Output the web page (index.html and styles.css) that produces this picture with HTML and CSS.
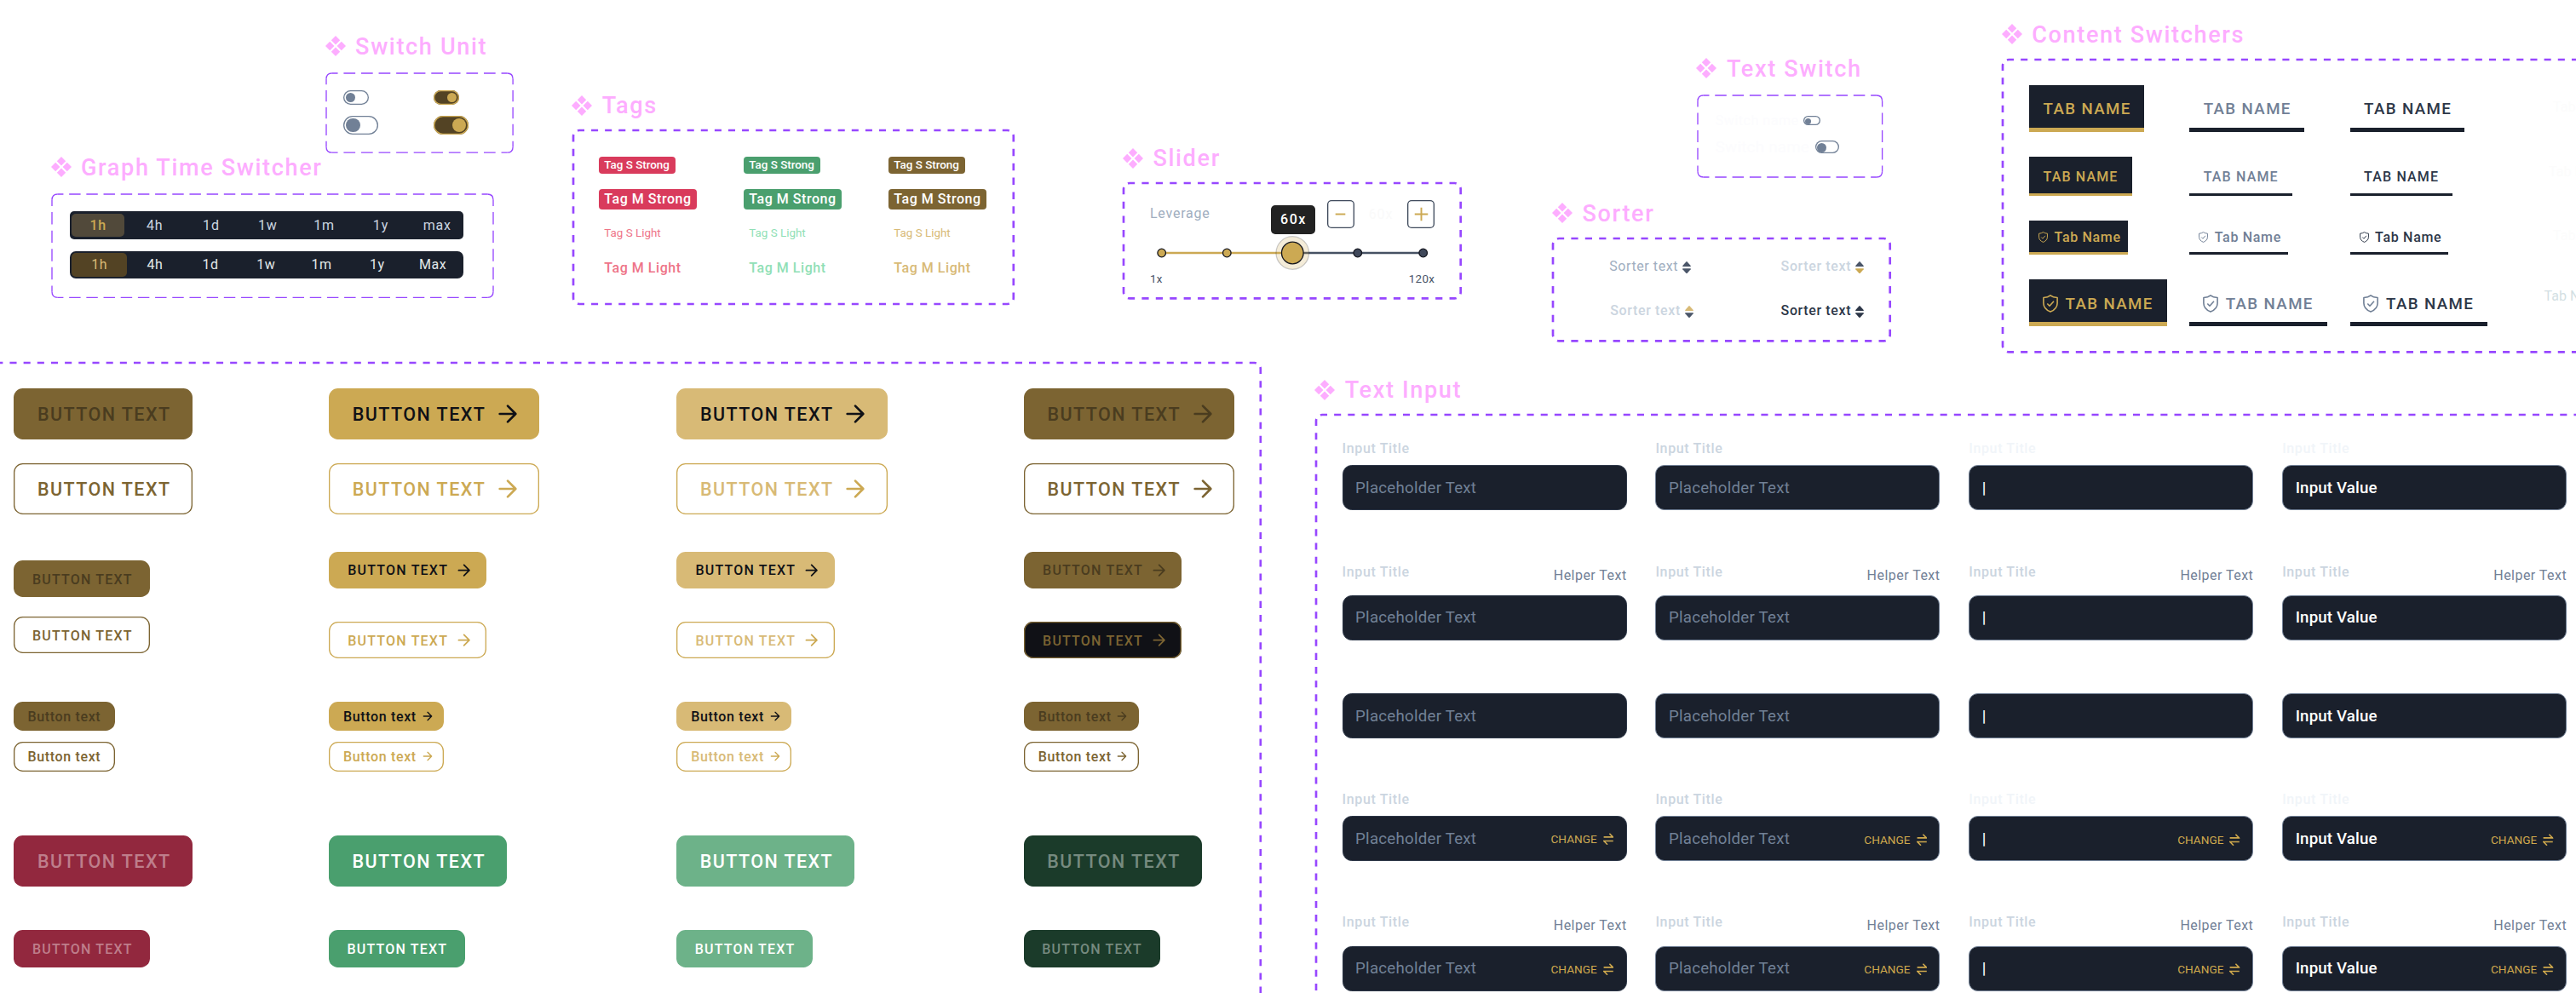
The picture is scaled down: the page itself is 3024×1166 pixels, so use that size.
FILE: index.html
```html
<!DOCTYPE html>
<html lang="en">
<head>
<meta charset="utf-8">
<title>Component library</title>
<link rel="stylesheet" href="styles.css">
</head>
<body>
<svg class="sprite" aria-hidden="true">
  <symbol id="component" viewBox="0 0 24 24"><path d="M12 0l5.2 5.2L12 10.4 6.8 5.2zM5.2 6.8l5.2 5.2-5.2 5.2L0 12zM18.8 6.8L24 12l-5.2 5.2-5.2-5.2zM12 13.6l5.2 5.2L12 24l-5.2-5.2z" fill="currentColor"/></symbol>
  <symbol id="arrow" viewBox="0 0 24 24"><path d="M5 12h14M12 5l7 7-7 7" fill="none" stroke="currentColor" stroke-width="2" stroke-linecap="round" stroke-linejoin="round"/></symbol>
  <symbol id="swap" viewBox="0 0 12.4 14.4"><path d="M.6 4.9H11.6L7.4.7M11.8 9.5H.8L5 13.7" fill="none" stroke="currentColor" stroke-width="1.6"/></symbol>
  <symbol id="shield" viewBox="0 0 18 21"><path d="M9 .9C7 2.500 4 3.300 .9 3.500V10C.9 15 4.500 18.300 9 20.100 13.500 18.300 17.100 15 17.100 10V3.500C14 3.300 11 2.500 9 .9zM5.300 10.500l2.700 2.700 5-5.400" fill="none" stroke="currentColor" stroke-width="1.600" stroke-linejoin="round"/></symbol>
  <symbol id="sort-up" viewBox="0 0 10 6.200"><path d="M4.300.4Q5-.2 5.700.4L9.700 5Q10.200 6 9.300 6H.7Q-.2 6 .3 5z" fill="currentColor"/></symbol>
  <symbol id="sort-down" viewBox="0 0 10 6.200"><path d="M4.300 5.800Q5 6.400 5.700 5.800L9.700 1.200Q10.200.2 9.300.2H.7Q-.2.2.3 1.200z" fill="currentColor"/></symbol>
</svg>

<main class="canvas">

  <section class="set set-switch">
    <h2 class="set-title"><svg class="set-icon"><use href="#component"/></svg>Switch Unit</h2>
    <div class="frame frame-thin">
      <svg class="outline thin"><path class="corner" d="M0 6.700Q0 0 6.700 0M212.400 0Q219.100 0 219.100 6.700M219.100 86.400Q219.100 93.100 212.400 93.100M6.700 93.100Q0 93.100 0 86.400"/><path pathLength="30" d="M6.700 0H212.400"/><path pathLength="30" d="M6.700 93.100H212.400"/><path pathLength="12" d="M0 6.700V86.400"/><path pathLength="12" d="M219.100 6.700V86.400"/></svg>
      <div class="switch-row"><span class="switch s"></span><span class="switch s on"></span></div>
      <div class="switch-row"><span class="switch m"></span><span class="switch m on"></span></div>
    </div>
  </section>

  <section class="set set-graph">
    <h2 class="set-title"><svg class="set-icon"><use href="#component"/></svg>Graph Time Switcher</h2>
    <div class="frame frame-thin">
      <svg class="outline thin"><path class="corner" d="M0 6.700Q0 0 6.700 0M511.300 0Q518 0 518 6.700M518 114.600Q518 121.300 511.300 121.300M6.700 121.300Q0 121.300 0 114.600"/><path pathLength="75" d="M6.700 0H511.300"/><path pathLength="75" d="M6.700 121.300H511.300"/><path pathLength="15" d="M0 6.700V114.600"/><path pathLength="15" d="M518 6.700V114.600"/></svg>
      <div class="times"><span class="time active">1h</span><span class="time">4h</span><span class="time">1d</span><span class="time">1w</span><span class="time">1m</span><span class="time">1y</span><span class="time">max</span></div>
      <div class="times times-alt"><span class="time active">1h</span><span class="time">4h</span><span class="time">1d</span><span class="time">1w</span><span class="time">1m</span><span class="time">1y</span><span class="time">Max</span></div>
    </div>
  </section>

  <section class="set set-tags">
    <h2 class="set-title"><svg class="set-icon"><use href="#component"/></svg>Tags</h2>
    <div class="frame">
      <svg class="outline"><path pathLength="63" d="M5 .4Q6 0 7 0H509.800Q510.800 0 511.800 .4"/><path pathLength="63" d="M5 203.600Q6 204 7 204H509.800Q510.800 204 511.800 203.600"/><path pathLength="23" d="M.4 5Q0 6 0 7V197Q0 198 .4 199"/><path pathLength="23" d="M516.400 5Q516.800 6 516.800 7V197Q516.800 198 516.400 199"/></svg>
      <div class="tag-column red"><span class="tag tag-s">Tag S Strong</span><span class="tag tag-m">Tag M Strong</span><span class="tag tag-s light">Tag S Light</span><span class="tag tag-m light">Tag M Light</span></div>
      <div class="tag-column green"><span class="tag tag-s">Tag S Strong</span><span class="tag tag-m">Tag M Strong</span><span class="tag tag-s light">Tag S Light</span><span class="tag tag-m light">Tag M Light</span></div>
      <div class="tag-column gold"><span class="tag tag-s">Tag S Strong</span><span class="tag tag-m">Tag M Strong</span><span class="tag tag-s light">Tag S Light</span><span class="tag tag-m light">Tag M Light</span></div>
    </div>
  </section>

  <section class="set set-slider">
    <h2 class="set-title"><svg class="set-icon"><use href="#component"/></svg>Slider</h2>
    <div class="frame">
      <svg class="outline"><path pathLength="47" d="M5 .4Q6 0 7 0H388.700Q389.700 0 390.700 .4"/><path pathLength="47" d="M5 134.900Q6 135.300 7 135.300H388.700Q389.700 135.300 390.700 134.900"/><path pathLength="15" d="M.4 5Q0 6 0 7V128.300Q0 129.300 .4 130.300"/><path pathLength="15" d="M395.300 5Q395.700 6 395.700 7V128.300Q395.700 129.300 395.300 130.300"/></svg>
      <div class="leverage">
        <span class="leverage-label">Leverage</span>
        <button class="step"><svg viewBox="0 0 24 24"><path d="M7.500 12h9"/></svg></button>
        <span class="leverage-value">60x</span>
        <button class="step"><svg viewBox="0 0 24 24"><path d="M6 12h12M12 6v12"/></svg></button>
      </div>
      <svg class="track" viewBox="0 0 340 42">
        <path d="M16.700 21H170" stroke="#cca953" stroke-width="2.600"/>
        <path d="M170 21H323.700" stroke="#465163" stroke-width="2.600"/>
        <g fill="#cca953" stroke="#14161f" stroke-width="1.300"><circle cx="16.700" cy="21" r="4.800"/><circle cx="93.300" cy="21" r="4.800"/></g>
        <g fill="#3f485a" stroke="#14161f" stroke-width="1.300"><circle cx="246.800" cy="21" r="4.800"/><circle cx="323.700" cy="21" r="4.800"/></g>
        <circle cx="170.300" cy="21" r="19.300" fill="#cca953" fill-opacity=".22" stroke="#1a202c" stroke-opacity=".22" stroke-width="1.300"/>
        <circle cx="170.300" cy="21" r="12.800" fill="#cca953" stroke="#14161f" stroke-width="1.300"/>
      </svg>
      <div class="scale"><span>1x</span><span>120x</span></div>
      <span class="tooltip">60x</span>
    </div>
  </section>

  <section class="set set-text-switch">
    <h2 class="set-title"><svg class="set-icon"><use href="#component"/></svg>Text Switch</h2>
    <div class="frame frame-thin">
      <svg class="outline thin"><path class="corner" d="M0 6.700Q0 0 6.700 0M209.900 0Q216.600 0 216.600 6.700M216.600 89.300Q216.600 96 209.900 96M6.700 96Q0 96 0 89.300"/><path pathLength="30" d="M6.700 0H209.900"/><path pathLength="30" d="M6.700 96H209.900"/><path pathLength="12" d="M0 6.700V89.300"/><path pathLength="12" d="M216.600 6.700V89.300"/></svg>
      <div class="named-switch"><span class="switch-name">Switch name</span><span class="switch xs"></span></div>
      <div class="named-switch medium"><span class="switch-name">Switch name</span><span class="switch sm"></span></div>
    </div>
  </section>

  <section class="set set-sorter">
    <h2 class="set-title"><svg class="set-icon"><use href="#component"/></svg>Sorter</h2>
    <div class="frame">
      <svg class="outline"><path pathLength="47" d="M5 .4Q6 0 7 0H388.700Q389.700 0 390.700 .4"/><path pathLength="47" d="M5 119.900Q6 120.300 7 120.300H388.700Q389.700 120.300 390.700 119.900"/><path pathLength="13" d="M.4 5Q0 6 0 7V113.300Q0 114.300 .4 115.300"/><path pathLength="13" d="M395.300 5Q395.700 6 395.700 7V113.300Q395.700 114.300 395.300 115.300"/></svg>
      <div class="sorter idle">Sorter text<span class="sort"><svg><use href="#sort-up"/></svg><svg><use href="#sort-down"/></svg></span></div>
      <div class="sorter down">Sorter text<span class="sort"><svg><use href="#sort-up"/></svg><svg><use href="#sort-down"/></svg></span></div>
      <div class="sorter up">Sorter text<span class="sort"><svg><use href="#sort-up"/></svg><svg><use href="#sort-down"/></svg></span></div>
      <div class="sorter hover">Sorter text<span class="sort"><svg><use href="#sort-up"/></svg><svg><use href="#sort-down"/></svg></span></div>
    </div>
  </section>

  <section class="set set-content">
    <h2 class="set-title"><svg class="set-icon"><use href="#component"/></svg>Content Switchers</h2>
    <div class="frame">
      <svg class="outline open"><path d="M5 .4Q6 0 7 0H680"/><path d="M5 342.900Q6 343.300 7 343.300H680"/><path class="fit" pathLength="41" d="M.4 5Q0 6 0 7V336.300Q0 337.300 .4 338.300"/></svg>
      <div class="tab-row large"><span class="tab active">TAB NAME</span><span class="tab">TAB NAME</span><span class="tab hover">TAB NAME</span><span class="ghost">Tab Name</span></div>
      <div class="tab-row medium"><span class="tab active">TAB NAME</span><span class="tab">TAB NAME</span><span class="tab hover">TAB NAME</span><span class="ghost">Tab Name</span></div>
      <div class="tab-row small"><span class="tab active"><svg><use href="#shield"/></svg>Tab Name</span><span class="tab"><svg><use href="#shield"/></svg>Tab Name</span><span class="tab hover"><svg><use href="#shield"/></svg>Tab Name</span><span class="ghost">Tab Name</span></div>
      <div class="tab-row large with-icon"><span class="tab active"><svg><use href="#shield"/></svg>TAB NAME</span><span class="tab"><svg><use href="#shield"/></svg>TAB NAME</span><span class="tab hover"><svg><use href="#shield"/></svg>TAB NAME</span><span class="ghost">Tab Name</span></div>
    </div>
  </section>

  <section class="set set-buttons">
    <div class="frame">
      <svg class="outline open"><path d="M1484.800 .4Q1483.800 0 1482.800 0H0"/><path d="M1489.400 5Q1489.800 6 1489.800 7V760"/></svg>
      <button class="btn lg olive">BUTTON TEXT</button>
      <button class="btn lg icon primary">BUTTON TEXT<svg><use href="#arrow"/></svg></button>
      <button class="btn lg icon pale">BUTTON TEXT<svg><use href="#arrow"/></svg></button>
      <button class="btn lg icon olive">BUTTON TEXT<svg><use href="#arrow"/></svg></button>

      <button class="btn lg line olive-line">BUTTON TEXT</button>
      <button class="btn lg icon line gold-line">BUTTON TEXT<svg><use href="#arrow"/></svg></button>
      <button class="btn lg icon line pale-line">BUTTON TEXT<svg><use href="#arrow"/></svg></button>
      <button class="btn lg icon line olive-line">BUTTON TEXT<svg><use href="#arrow"/></svg></button>

      <button class="btn md olive lowered">BUTTON TEXT</button>
      <button class="btn md icon primary">BUTTON TEXT<svg><use href="#arrow"/></svg></button>
      <button class="btn md icon pale">BUTTON TEXT<svg><use href="#arrow"/></svg></button>
      <button class="btn md icon olive">BUTTON TEXT<svg><use href="#arrow"/></svg></button>

      <button class="btn md line olive-line">BUTTON TEXT</button>
      <button class="btn md icon line gold-line nudged">BUTTON TEXT<svg><use href="#arrow"/></svg></button>
      <button class="btn md icon line pale-line nudged">BUTTON TEXT<svg><use href="#arrow"/></svg></button>
      <button class="btn md icon line olive-line filled nudged">BUTTON TEXT<svg><use href="#arrow"/></svg></button>

      <button class="btn sm olive">Button text</button>
      <button class="btn sm icon primary">Button text<svg><use href="#arrow"/></svg></button>
      <button class="btn sm icon pale">Button text<svg><use href="#arrow"/></svg></button>
      <button class="btn sm icon olive">Button text<svg><use href="#arrow"/></svg></button>

      <button class="btn sm line olive-line">Button text</button>
      <button class="btn sm icon line gold-line">Button text<svg><use href="#arrow"/></svg></button>
      <button class="btn sm icon line pale-line">Button text<svg><use href="#arrow"/></svg></button>
      <button class="btn sm icon line olive-line">Button text<svg><use href="#arrow"/></svg></button>

      <button class="btn lg wine">BUTTON TEXT</button>
      <button class="btn lg green">BUTTON TEXT</button>
      <button class="btn lg mint">BUTTON TEXT</button>
      <button class="btn lg forest">BUTTON TEXT</button>

      <button class="btn md tall wine">BUTTON TEXT</button>
      <button class="btn md tall green">BUTTON TEXT</button>
      <button class="btn md tall mint">BUTTON TEXT</button>
      <button class="btn md tall forest">BUTTON TEXT</button>
    </div>
  </section>

  <section class="set set-input">
    <h2 class="set-title"><svg class="set-icon"><use href="#component"/></svg>Text Input</h2>
    <div class="frame">
      <svg class="outline open"><path d="M5 .4Q6 0 7 0H1490"/><path d="M.4 5Q0 6 0 7V690"/></svg>
      <div class="field-row row-1">
        <div class="field"><div class="field-head"><span>Input Title</span></div><div class="input plain">Placeholder Text</div></div>
        <div class="field"><div class="field-head"><span>Input Title</span></div><div class="input">Placeholder Text</div></div>
        <div class="field"><div class="field-head faint"><span>Input Title</span></div><div class="input filled">|</div></div>
        <div class="field"><div class="field-head faint"><span>Input Title</span></div><div class="input filled">Input Value</div></div>
      </div>
      <div class="field-row row-2">
        <div class="field"><div class="field-head"><span>Input Title</span><span class="helper">Helper Text</span></div><div class="input plain">Placeholder Text</div></div>
        <div class="field"><div class="field-head"><span>Input Title</span><span class="helper">Helper Text</span></div><div class="input">Placeholder Text</div></div>
        <div class="field"><div class="field-head"><span>Input Title</span><span class="helper">Helper Text</span></div><div class="input filled">|</div></div>
        <div class="field"><div class="field-head"><span>Input Title</span><span class="helper">Helper Text</span></div><div class="input filled">Input Value</div></div>
      </div>
      <div class="field-row row-3">
        <div class="field"><div class="input plain">Placeholder Text</div></div>
        <div class="field"><div class="input">Placeholder Text</div></div>
        <div class="field"><div class="input filled">|</div></div>
        <div class="field"><div class="input filled">Input Value</div></div>
      </div>
      <div class="field-row row-4">
        <div class="field"><div class="field-head"><span>Input Title</span></div><div class="input plain">Placeholder Text<span class="change">CHANGE<svg><use href="#swap"/></svg></span></div></div>
        <div class="field"><div class="field-head"><span>Input Title</span></div><div class="input">Placeholder Text<span class="change low">CHANGE<svg><use href="#swap"/></svg></span></div></div>
        <div class="field"><div class="field-head faint"><span>Input Title</span></div><div class="input filled">|<span class="change low">CHANGE<svg><use href="#swap"/></svg></span></div></div>
        <div class="field"><div class="field-head faint"><span>Input Title</span></div><div class="input filled">Input Value<span class="change low">CHANGE<svg><use href="#swap"/></svg></span></div></div>
      </div>
      <div class="field-row row-5">
        <div class="field"><div class="field-head"><span>Input Title</span><span class="helper">Helper Text</span></div><div class="input plain">Placeholder Text<span class="change low">CHANGE<svg><use href="#swap"/></svg></span></div></div>
        <div class="field"><div class="field-head"><span>Input Title</span><span class="helper">Helper Text</span></div><div class="input">Placeholder Text<span class="change low">CHANGE<svg><use href="#swap"/></svg></span></div></div>
        <div class="field"><div class="field-head"><span>Input Title</span><span class="helper">Helper Text</span></div><div class="input filled">|<span class="change low">CHANGE<svg><use href="#swap"/></svg></span></div></div>
        <div class="field"><div class="field-head"><span>Input Title</span><span class="helper">Helper Text</span></div><div class="input filled">Input Value<span class="change low">CHANGE<svg><use href="#swap"/></svg></span></div></div>
      </div>
    </div>
  </section>

</main>
</body>
</html>
```
FILE: styles.css
```css
* { box-sizing: border-box; }

body {
  margin: 0;
  background: #fff;
  font-family: Roboto, "Liberation Sans", sans-serif;
  font-size: 16px;
}

.sprite { position: absolute; width: 0; height: 0; }

.canvas {
  position: relative;
  width: 3024px;
  height: 1166px;
  overflow: hidden;
}

/* Component sets are placed freely on the canvas */
.set { position: absolute; }
.set-switch { left: 382.900px; top: 42px; }
.set-graph { left: 60.800px; top: 184px; }
.set-tags { left: 672.500px; top: 111.700px; }
.set-slider { left: 1319.300px; top: 173.700px; }
.set-text-switch { left: 1992.700px; top: 68px; }
.set-sorter { left: 1823.300px; top: 238.200px; }
.set-content { left: 2351px; top: 28.400px; }
.set-buttons { left: -10px; top: 425.700px; }
.set-input { left: 1544.500px; top: 445.500px; }

.set-title {
  display: flex;
  align-items: center;
  gap: 11.500px;
  height: 24px;
  margin: 0 0 17.500px -1.300px;
  font-size: 27.100px;
  font-weight: 500;
  line-height: 26px;
  letter-spacing: 1.630px;
  white-space: nowrap;
  color: #fdadff;
}
.set-title::after { content: ""; }
.set-icon { width: 24px; height: 24px; flex: none; margin-top: -1px; }
.set-title { padding-top: 1px; }

.frame { position: relative; }
.frame-thin { margin-top: 19.500px; }

.outline {
  position: absolute;
  left: 0;
  top: 0;
  width: 100%;
  height: 100%;
  overflow: visible;
  fill: none;
  stroke: #9747ff;
  stroke-width: 2.670;
  stroke-dasharray: 1 1;
}
.outline.thin { stroke-width: 1.330; stroke-dasharray: 2 1; stroke-dashoffset: 1; }
.outline .corner { stroke-dasharray: none; }
.outline.open { stroke-dasharray: 8.100 8.070; }
.outline .fit { stroke-dasharray: 1 1; }

/* Switches */
.set-switch .frame { width: 219.100px; height: 93.100px; padding: 20.500px 0 0 20.500px; }
.switch-row {
  display: grid;
  grid-template-columns: 106px auto;
  justify-content: start;
  margin-bottom: 13.700px;
}
.switch {
  display: flex;
  align-items: center;
  border-radius: 20px;
  box-shadow: inset 0 0 0 1.330px currentColor;
  color: #718096;
}
.switch::before { content: ""; border-radius: 50%; background: currentColor; }
.switch.on { justify-content: flex-end; background: #534324; color: #cca953; }
.switch.s { width: 30px; height: 16.700px; padding: 0 3px; }
.switch.s::before { width: 11px; height: 11px; }
.switch.m { width: 41px; height: 21.400px; padding: 0 3px; }
.switch.m::before { width: 16.500px; height: 16.500px; }
.switch.xs { width: 20px; height: 11px; padding: 1px 2px 0; }
.switch.xs::before { width: 7px; height: 7px; }
.switch.sm { width: 28px; height: 15px; padding: 2px 2px 0; }
.switch.sm::before { width: 11px; height: 11px; }

/* Graph time switcher */
.set-graph .frame { width: 518px; height: 121.300px; padding: 20.300px 0 0 20.800px; }
.times {
  display: flex;
  align-items: center;
  gap: 3.850px;
  width: 462px;
  height: 33px;
  padding-left: 2.400px;
  margin-bottom: 14.300px;
  border-radius: 5px;
  background: #1a202c;
  color: #cbd5e0;
}
.time { flex: none; width: 62.500px; text-align: center; line-height: 27.600px; letter-spacing: .8px; }
.time.active { border-radius: 5px; background: #51493a; color: #cca953; font-weight: 500; }
.times-alt { gap: 0; height: 32.400px; border-radius: 7px; color: #e2e8e8; }
.times-alt .time { width: 65.250px; letter-spacing: .5px; }
.times-alt .time.active { background: #534324; color: #d8ba76; font-weight: 400; }

/* Tags */
.set-tags .frame { display: flex; width: 516.800px; height: 204px; padding: 31px 0 0 30.400px; }
.tag-column { flex: none; width: 170px; display: flex; flex-direction: column; align-items: flex-start; }
.tag { padding: 0 6.600px 0 6.400px; border-radius: 4px; color: #fff; font-weight: 500; white-space: nowrap; }
.tag-s { height: 20px; line-height: 20.500px; font-size: 13.400px; }
.tag-m { height: 23.300px; line-height: 23.300px; letter-spacing: .54px; }
.tag-s + .tag-m { margin-top: 18.300px; }
.tag-m + .tag-s { margin-top: 18.600px; }
.tag.tag-s.light { font-weight: 400; }
.red .tag { background: #d93b5c; }
.green .tag { background: #4a9f6e; }
.gold .tag { background: #7c6432; }
.tag-column .tag.light { background: none; }
.red .light { color: #ee7488; }
.green .light { color: #90dfb6; }
.gold .light { color: #d8ba76; }

/* Slider */
.set-slider .frame { width: 395.700px; height: 135.300px; padding: 20px 30.700px 0 30.700px; }
.leverage { display: flex; align-items: center; height: 32.500px; }
.leverage-label { flex: 1; color: #a0aec0; letter-spacing: .76px; line-height: 32px; }
.leverage-value { width: 62px; text-align: center; color: #fafafa; letter-spacing: .8px; }
.step {
  width: 32.300px;
  height: 32.500px;
  padding: 0;
  display: flex;
  align-items: center;
  justify-content: center;
  border: 0;
  box-shadow: inset 0 0 0 1.330px #3f4a5c;
  border-radius: 5px;
  background: #fff;
}
.step svg { width: 31px; height: 31px; flex: none; fill: none; stroke: #cca953; stroke-width: 1.500; }
.track { display: block; width: 340px; height: 42px; margin: 8.800px 0 0 -3px; }
.scale {
  display: flex;
  justify-content: space-between;
  margin-top: -.3px;
  font-size: 13.350px;
  line-height: 20px;
  letter-spacing: .36px;
  color: #4a5568;
}
.tooltip {
  position: absolute;
  left: 172.700px;
  top: 25.500px;
  width: 52px;
  height: 34px;
  padding-left: 1px;
  border-radius: 5px;
  background: #222;
  color: #fff;
  font-weight: 500;
  line-height: 34px;
  letter-spacing: 1.500px;
  text-align: center;
}

/* Text switch */
.set-text-switch .frame { width: 216.600px; height: 96px; padding: 20px 0 0 21px; }
.named-switch { display: flex; align-items: center; gap: 10px; height: 20px; color: #fcfcfe; letter-spacing: .55px; }
.named-switch .switch { color: #718096; }
.switch-name { width: 93px; white-space: nowrap; }
.named-switch.medium { height: 34px; margin-top: 4px; gap: 14px; font-size: 18.700px; letter-spacing: .28px; }
.named-switch.medium .switch-name { width: 103.500px; }

/* Sorter */
.set-sorter .frame {
  display: grid;
  grid-template-columns: 201.300px auto;
  grid-auto-rows: 52.300px;
  justify-content: start;
  width: 395.700px;
  height: 120.300px;
  padding: 22px 0 0 66px;
}
.sorter { display: flex; align-items: flex-start; line-height: 22px; letter-spacing: .63px; font-weight: 500; }
.sort { display: flex; flex-direction: column; gap: 1.700px; margin: 5px 0 0 5px; }
.sort svg { display: block; width: 10px; height: 6.200px; }
.sorter .sort { color: #4a5568; }
.sorter.idle { color: #a0aec0; font-weight: 400; letter-spacing: .57px; }
.sorter.down, .sorter.up { color: #cbd5e0; }
.sorter.up { padding-left: 1px; }
.sorter.down svg:last-child { color: #cca953; }
.sorter.up svg:first-child { color: #d8ba76; }
.sorter.hover, .sorter.hover .sort { color: #2d3748; }

/* Content switchers */
.set-content .frame { width: 720px; height: 343.300px; padding: 30.300px 0 0 31px; }
.tab-row { display: grid; grid-template-columns: 188.200px 188.400px 228px auto; align-items: start; justify-content: start; }
.tab {
  justify-self: start;
  display: flex;
  align-items: center;
  gap: 9px;
  padding-left: 16.500px;
  border-bottom: solid #1a202c;
  color: #718096;
  font-weight: 500;
  white-space: nowrap;
}
.tab.hover { color: #2d3748; }
.tab.active { color: #cca953; background: #1a202c; border-color: #cca953; }
.large .tab { width: 134.800px; height: 54.600px; padding-top: 7px; border-bottom-width: 5.500px; font-size: 18.700px; letter-spacing: 1.380px; }
.medium .tab { width: 120.800px; height: 45.700px; padding-top: 4.500px; border-bottom-width: 3px; font-size: 16px; letter-spacing: 1.150px; }
.small .tab { width: 115.800px; height: 40px; padding: 2px 0 0 11px; border-bottom-width: 3px; gap: 7.500px; letter-spacing: .68px; }
.small .tab svg { width: 11px; height: 13px; flex: none; }
.with-icon .tab { width: 161.600px; padding-left: 15.500px; }
.with-icon .tab svg { width: 18px; height: 21px; flex: none; }
.with-icon .tab.hover svg { color: #718096; }
.medium.tab-row, .small.tab-row, .with-icon.tab-row { margin-top: 29.300px; }
.ghost { padding: 16px 0 0 10.500px; white-space: nowrap; color: #fcfcfc; }
.medium .ghost { padding: 8px 0 0 5.500px; }
.small .ghost { padding: 8px 0 0 10.500px; }
.with-icon .ghost { padding: 10px 0 0 0; color: #d3dfe3; }

/* Buttons */
.set-buttons .frame {
  display: grid;
  grid-template-columns: 369.500px 408.200px 407.600px auto;
  grid-template-rows: 87.700px 104px 76px 100px 47.300px 110px 110.700px 45px;
  align-items: start;
  justify-items: start;
  justify-content: start;
  width: 1489.800px;
  height: 750px;
  padding: 30.600px 0 0 26.300px;
}
.btn {
  display: flex;
  align-items: center;
  justify-content: space-between;
  padding: 0;
  border: 0;
  border-radius: 10.700px;
  font-family: inherit;
  font-weight: 500;
  white-space: nowrap;
}
.btn svg { flex: none; }
.btn.lg { width: 209.400px; height: 59.600px; padding: 1px 21.300px 0 27.700px; font-size: 21.500px; letter-spacing: 1.450px; }
.btn.lg.icon { width: 247.700px; padding-left: 28px; }
.btn.lg svg { width: 32px; height: 32px; margin-top: -1px; }
.btn.md { width: 160px; height: 43.400px; padding: 2px 16px 0 21.700px; font-size: 16px; letter-spacing: 1.200px; }
.btn.md.icon { width: 185.600px; height: 42.700px; padding: 1px 16px 0 22.500px; }
.btn.md svg { width: 21.360px; height: 21.360px; }
.btn.md.tall { height: 44.500px; padding-top: 1px; }
.btn.sm { width: 118.300px; height: 34.300px; padding: 0 11.300px 0 16.200px; font-size: 16px; letter-spacing: .65px; }
.btn.sm.icon { width: 135.200px; padding-left: 17.200px; }
.btn.sm svg { width: 16px; height: 16px; }
.lowered { margin-top: 10px; }
.nudged { margin-top: 6.300px; }

.olive { background: #7c6432; color: #4a3c1f; }
.primary { background: #cca953; color: #101116; }
.pale { background: #d8ba76; color: #101116; }
.wine { background: #92283e; color: #be7e8b; }
.green.btn { background: #4a9f6e; color: #fff; }
.mint { background: #6db289; color: #fff; }
.forest { background: #1b3b2a; color: #768a7f; }
.line { background: #fff; box-shadow: inset 0 0 0 1.330px currentColor; }
.olive-line { color: #7c6432; }
.gold-line { color: #cca953; }
.pale-line { color: #d8ba76; box-shadow: inset 0 0 0 1.330px #cca953; }
.pale-line svg { color: #cca953; }
.filled.btn { background: #101116; }

/* Text inputs */
.set-input .frame { width: 1490px; height: 700px; padding: 29.300px 0 0 31.100px; }
.field-row { display: grid; grid-template-columns: repeat(4, 334px); gap: 33.850px; }
.row-2 { margin-top: 61.700px; }
.row-3 { margin-top: 62.300px; }
.row-4 { margin-top: 61.500px; }
.row-5 { margin-top: 61.200px; }
.field-head {
  display: flex;
  justify-content: space-between;
  height: 30px;
  line-height: 21px;
  letter-spacing: .63px;
  font-size: 16px;
  font-weight: 500;
  color: #cbd5e0;
}
.row-2 .field-head, .row-5 .field-head { height: 38.300px; }
.field-head.faint { color: #f1f5f9; }
.helper { padding-top: 4px; color: #718096; font-weight: 400; letter-spacing: .46px; }
.input {
  display: flex;
  align-items: center;
  justify-content: space-between;
  height: 52.800px;
  padding: 0 14.500px;
  border: 1px solid #718096;
  border-radius: 10.700px;
  background: #1a202c;
  color: #718096;
  font-size: 18.700px;
  letter-spacing: .24px;
}
.input.plain { border-color: #2d3748; }
.input.filled { color: #fff; font-weight: 500; letter-spacing: .16px; }
.change { display: flex; align-items: center; gap: 7px; color: #cca953; font-size: 13.600px; font-weight: 400; letter-spacing: 0; }
.change svg { width: 12.400px; height: 14.400px; }
.change.low { padding-top: 2px; color: #d0a94d; }
```
